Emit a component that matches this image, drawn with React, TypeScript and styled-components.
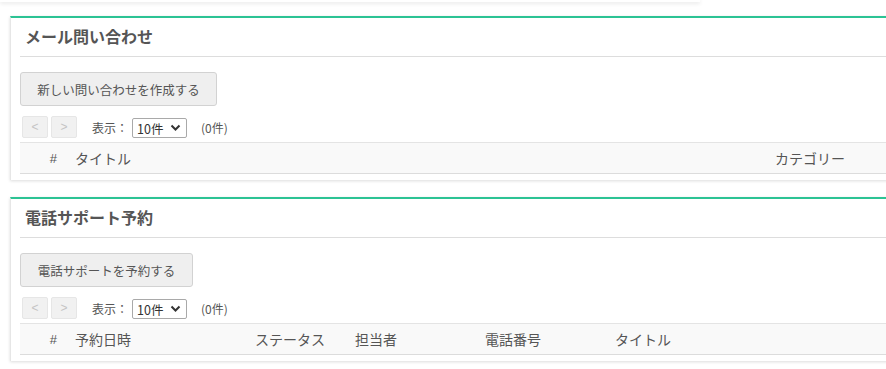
import styled, { createGlobalStyle } from 'styled-components';

const GlobalStyle = createGlobalStyle`
  body {
    margin: 0;
    background: #ffffff;
    overflow: hidden;
    font-family: 'Noto Sans CJK JP', 'Noto Sans', sans-serif;
    color: #555555;
  }
`;

const Page = styled.div`
  width: 886px;
  height: 369px;
  overflow: hidden;
`;
const TopCardEdge = styled.div`
  width: 700px;
  height: 2px;
  background: #ffffff;
  box-shadow: 0 1px 4px rgba(0, 0, 0, 0.16);
`;
const Stack = styled.div`
  display: flex;
  flex-direction: column;
  gap: 17px;
  padding: 14px 0 0 10px;
`;
const Card = styled.section`
  width: 900px;
  background: #ffffff;
  border-top: 2px solid #2cc394;
  border-left: 1px solid #e6e6e6;
  box-shadow: 0 1px 3px rgba(0, 0, 0, 0.14);
  padding: 0 9px 6px;
  box-sizing: border-box;
`;
const CardTitle = styled.h2`
  margin: 0;
  height: 38px;
  line-height: 36px;
  padding-left: 5px;
  font-size: 16px;
  font-weight: 700;
  color: #555555;
  border-bottom: 1px solid #dddddd;
`;
const Body = styled.div`
  padding-top: 15px;
`;
const ActionButton = styled.button<{ $width: number }>`
  width: ${(p) => p.$width}px;
  height: 34px;
  background: #efefef;
  border: 1px solid #d2d2d2;
  border-radius: 3px;
  font-family: 'Noto Sans CJK JP', sans-serif;
  font-size: 12.5px;
  color: #555555;
  cursor: pointer;
  padding: 0;
`;
const Pager = styled.div`
  display: flex;
  align-items: center;
  height: 22px;
  margin: 10px 0 4px 2px;
  font-size: 12px;
  color: #555555;
`;
const PageButton = styled.button`
  width: 26px;
  height: 22px;
  margin-right: 3px;
  background: #f1f1f1;
  border: 1px solid #e6e6e6;
  border-radius: 2px;
  color: #c4c4c4;
  font-family: 'Liberation Sans', sans-serif;
  font-size: 12px;
  padding: 0;
`;
const Label = styled.span`
  margin-left: 12px;
  margin-right: 4px;
`;
const SelectWrap = styled.div`
  position: relative;
  width: 55px;
  height: 20px;
  margin-top: 2px;
`;
const Select = styled.select`
  appearance: none;
  -webkit-appearance: none;
  width: 55px;
  height: 20px;
  border: 1px solid #a9a9a9;
  border-radius: 2px;
  background: #ffffff;
  font-family: 'Noto Sans CJK JP', sans-serif;
  font-size: 12.5px;
  color: #333333;
  padding: 0 0 0 4px;
`;
const Chevron = styled.svg`
  position: absolute;
  right: 6px;
  top: 6px;
  pointer-events: none;
`;
const Count = styled.span`
  margin-left: 14px;
`;
const Table = styled.table`
  border-collapse: collapse;
  table-layout: fixed;
  width: 100%;
`;
const HeadCell = styled.th<{ $width?: number; $hash?: boolean }>`
  width: ${(p) => (p.$width ? `${p.$width}px` : 'auto')};
  height: 31px;
  padding: 0 ${(p) => (p.$hash ? '9px' : '0')} 0 ${(p) => (p.$hash ? '0' : '9px')};
  box-sizing: border-box;
  text-align: ${(p) => (p.$hash ? 'right' : 'left')};
  font-weight: 400;
  font-size: ${(p) => (p.$hash ? '13px' : '14px')};
  font-family: ${(p) => (p.$hash ? "'Liberation Sans', sans-serif" : "'Noto Sans CJK JP', sans-serif")};
  color: #555555;
  background: #f9f9f9;
  border-top: 1px solid #e4e4e4;
  border-bottom: 1px solid #dcdcdc;
  white-space: nowrap;
`;

const ChevronIcon = () => (
  <Chevron width="11" height="8" viewBox="0 0 11 8">
    <path d="M1.5 1.5 L5.5 5.5 L9.5 1.5" fill="none" stroke="#333" strokeWidth="2" />
  </Chevron>
);

const PagerRow = () => (
  <Pager>
    <PageButton>&lt;</PageButton>
    <PageButton>&gt;</PageButton>
    <Label>表示：</Label>
    <SelectWrap>
      <Select defaultValue="10">
        <option value="10">10件</option>
        <option value="20">20件</option>
        <option value="50">50件</option>
      </Select>
      <ChevronIcon />
    </SelectWrap>
    <Count>(0件)</Count>
  </Pager>
);

const App = () => (
  <Page>
    <GlobalStyle />
    <TopCardEdge />
    <Stack>
      <Card>
        <CardTitle>メール問い合わせ</CardTitle>
        <Body>
          <ActionButton $width={197}>新しい問い合わせを作成する</ActionButton>
          <PagerRow />
          <Table>
            <thead>
              <tr>
                <HeadCell $hash $width={46}>#</HeadCell>
                <HeadCell $width={700}>タイトル</HeadCell>
                <HeadCell>カテゴリー</HeadCell>
              </tr>
            </thead>
          </Table>
        </Body>
      </Card>
      <Card>
        <CardTitle>電話サポート予約</CardTitle>
        <Body>
          <ActionButton $width={173}>電話サポートを予約する</ActionButton>
          <PagerRow />
          <Table>
            <thead>
              <tr>
                <HeadCell $hash $width={46}>#</HeadCell>
                <HeadCell $width={180}>予約日時</HeadCell>
                <HeadCell $width={100}>ステータス</HeadCell>
                <HeadCell $width={130}>担当者</HeadCell>
                <HeadCell $width={130}>電話番号</HeadCell>
                <HeadCell>タイトル</HeadCell>
              </tr>
            </thead>
          </Table>
        </Body>
      </Card>
    </Stack>
  </Page>
);

export default App;
